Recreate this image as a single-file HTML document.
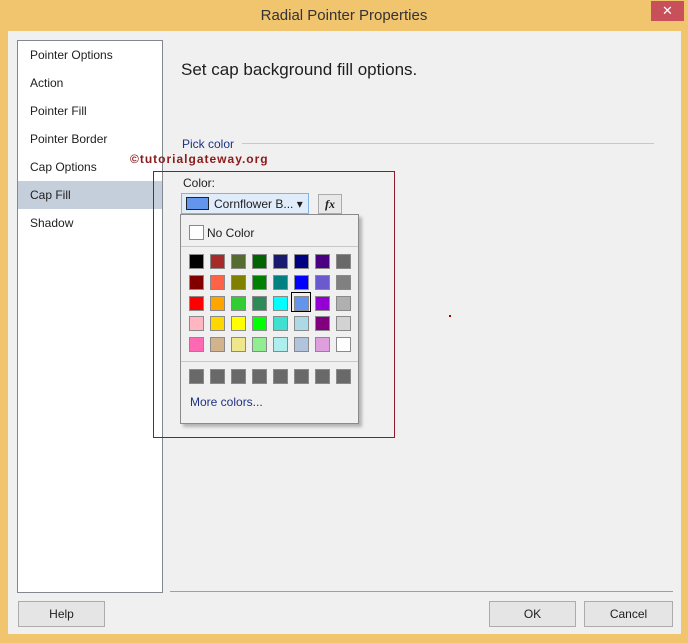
<!DOCTYPE html>
<html><head><style>
*{margin:0;padding:0;box-sizing:border-box}
body{width:688px;height:643px;overflow:hidden;background:#f1c46e;font-family:"Liberation Sans",sans-serif;font-size:12px;color:#1e1e1e;position:relative}
.a{position:absolute}
.inner{left:8px;top:31px;width:673px;height:603px;background:#f0f0f0}
.side{left:17px;top:40px;width:146px;height:553px;background:#fff;border:1px solid #828790}
.side div{position:absolute;left:12px;font-size:12px}
.btn{background:#e5e5e5;border:1px solid #acacac;text-align:center;line-height:24px;font-size:12px}
.sw{position:absolute;width:15px;height:15px;border:1px solid #8a8a8a}
</style></head><body>
<div class="a" style="left:0;top:0;width:688px;height:31px;text-align:center;line-height:31px;font-size:15px;color:#333">Radial Pointer Properties</div>
<div class="a" style="left:651px;top:1px;width:33px;height:20px;background:#c7505a;color:#fff;text-align:center;line-height:20px;font-size:13px">✕</div>
<div class="a inner"></div>
<div class="a side">
<div style="top:7px">Pointer Options</div>
<div style="top:35px">Action</div>
<div style="top:63px">Pointer Fill</div>
<div style="top:91px">Pointer Border</div>
<div style="top:119px">Cap Options</div>
<div style="top:140px;left:0;width:144px;height:28px;background:#c5cfdc"></div>
<div style="top:147px">Cap Fill</div>
<div style="top:175px">Shadow</div>
</div>
<div class="a" style="left:181px;top:60px;font-size:17px;color:#1e1e1e">Set cap background fill options.</div>
<div class="a" style="left:182px;top:137px;color:#1e3287">Pick color</div>
<div class="a" style="left:242px;top:143px;width:412px;height:1px;background:#c8c8c8"></div>
<div class="a" style="left:130px;top:152px;font-size:12px;font-weight:bold;color:#8b1a1a;letter-spacing:1px">©tutorialgateway.org</div>
<div class="a" style="left:153px;top:171px;width:242px;height:267px;border:1px solid #8b1a2a"></div>
<div class="a" style="left:183px;top:176px">Color:</div>
<div class="a" style="left:181px;top:193px;width:128px;height:21px;background:#e0ecf9;border:1px solid #7eb4ea"></div>
<div class="a" style="left:186px;top:197px;width:23px;height:13px;background:#6495ed;border:1px solid #222"></div>
<div class="a" style="left:214px;top:197px">Cornflower B... ▾</div>
<div class="a" style="left:318px;top:194px;width:24px;height:20px;background:#e8e8e8;border:1px solid #acacac;text-align:center;font-family:'Liberation Serif',serif;font-style:italic;font-weight:bold;line-height:18px">fx</div>
<div class="a" style="left:180px;top:214px;width:179px;height:210px;background:#f0f0f0;border:1px solid #8a8a8a;box-shadow:3px 3px 3px rgba(0,0,0,.25)"></div>
<div class="a" style="left:189px;top:225px;width:15px;height:15px;background:#fff;border:1px solid #888"></div>
<div class="a" style="left:207px;top:226px">No Color</div>
<div class="a" style="left:181px;top:246px;width:177px;height:1px;background:#c8c8c8"></div>
<div class="a" style="left:181px;top:361px;width:177px;height:1px;background:#c8c8c8"></div>
<div class="a" style="left:190px;top:395px;color:#1e3287">More colors...</div>
<div id="g"></div>
<div class="a" style="left:449px;top:315px;width:2px;height:2px;background:#a00"></div>
<div class="a" style="left:170px;top:591px;width:503px;height:1px;background:#a0a0a0"></div>
<div class="a btn" style="left:18px;top:601px;width:87px;height:26px">Help</div>
<div class="a btn" style="left:489px;top:601px;width:87px;height:26px">OK</div>
<div class="a btn" style="left:584px;top:601px;width:89px;height:26px">Cancel</div>
<script>
var c=[["#000","#a52a2a","#556b2f","#006400","#191970","#000080","#4b0082","#696969"],
["#800000","#ff6347","#808000","#008000","#008080","#0000ff","#6a5acd","#808080"],
["#ff0000","#ffa500","#32cd32","#2e8b57","#00ffff","#6495ed","#9400d3","#b0b0b0"],
["#ffb6c1","#ffd700","#ffff00","#00ff00","#40e0d0","#add8e6","#800080","#d3d3d3"],
["#ff69b4","#d2b48c","#f0e68c","#90ee90","#afeeee","#b0c4de","#dda0dd","#ffffff"]];
var h="";
for(var r=0;r<5;r++)for(var i=0;i<8;i++){h+='<div class="sw" style="left:'+(189+i*21)+'px;top:'+(254+r*20.8)+'px;background:'+c[r][i]+'"></div>';}
for(var i=0;i<8;i++)h+='<div class="sw" style="left:'+(189+i*21)+'px;top:369px;background:#696969"></div>';
h+='<div class="a" style="left:291px;top:292px;width:20px;height:20px;border:1px solid #000"></div>';
document.getElementById("g").innerHTML=h;
</script>
</body></html>
